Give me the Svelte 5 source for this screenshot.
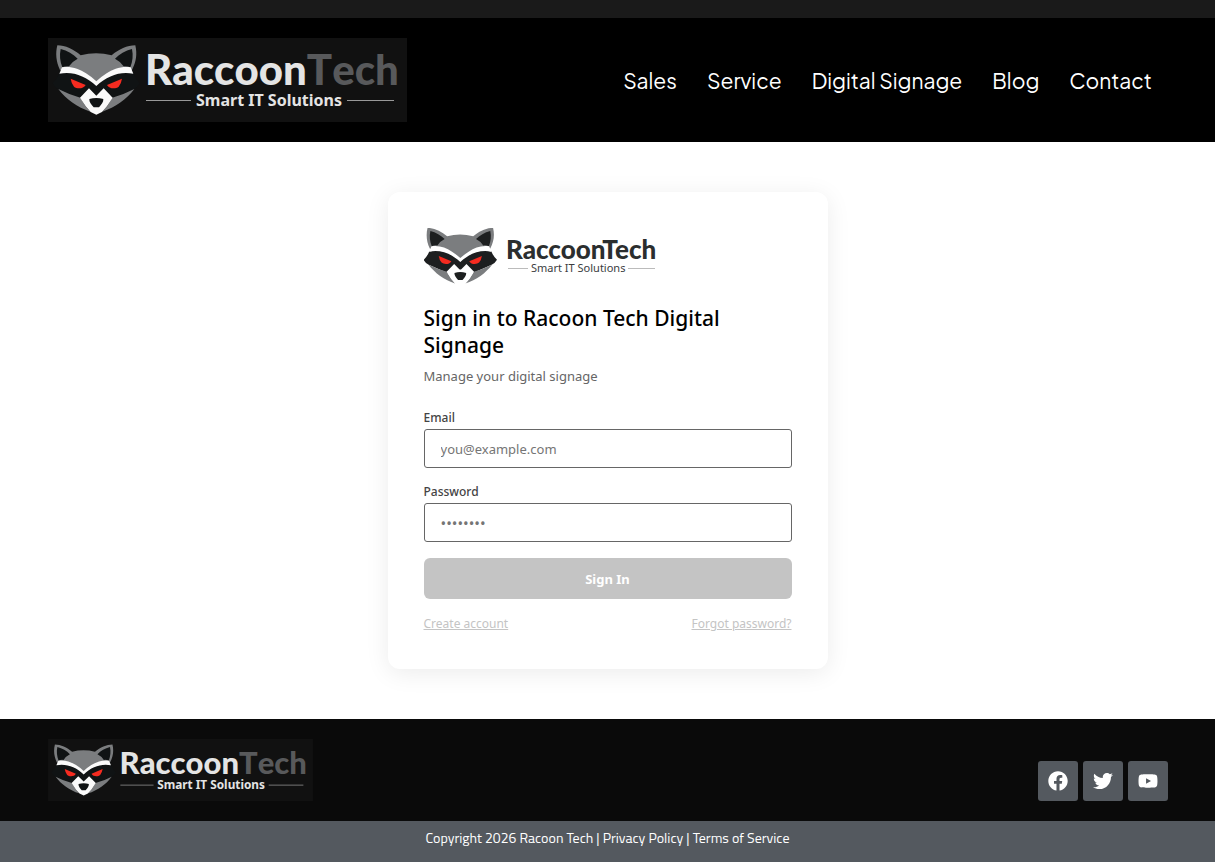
<script>
  const menu = ["Sales", "Service", "Digital Signage", "Blog", "Contact"];

  const redes = [
    {
      nombre: "Facebook",
      caja: "0 0 512 512",
      trazo: "M504 256C504 119 393 8 256 8S8 119 8 256c0 123.78 90.69 226.38 209.25 245V327.69h-63V256h63v-54.64c0-62.15 37-96.48 93.67-96.48 27.14 0 55.52 4.84 55.52 4.84v61h-31.28c-30.8 0-40.41 19.12-40.41 38.73V256h68.78l-11 71.69h-57.78V501C413.31 482.38 504 379.78 504 256z"
    },
    {
      nombre: "Twitter",
      caja: "0 0 512 512",
      trazo: "M459.37 151.716c.325 4.548.325 9.097.325 13.645 0 138.72-105.583 298.558-298.558 298.558-59.452 0-114.68-17.219-161.137-47.106 8.447.974 16.568 1.299 25.34 1.299 49.055 0 94.213-16.568 130.274-44.832-46.132-.975-84.792-31.188-98.112-72.772 6.498.974 12.995 1.624 19.818 1.624 9.421 0 18.843-1.3 27.614-3.573-48.081-9.747-84.143-51.98-84.143-102.985v-1.299c13.969 7.797 30.214 12.67 47.431 13.319-28.264-18.843-46.781-51.005-46.781-87.391 0-19.492 5.197-37.36 14.294-52.954 51.655 63.675 129.3 105.258 216.365 109.807-1.624-7.797-2.599-15.918-2.599-24.04 0-57.828 46.782-104.934 104.934-104.934 30.213 0 57.502 12.67 76.67 33.137 23.715-4.548 46.456-13.32 66.599-25.34-7.798 24.366-24.366 44.833-46.132 57.827 21.117-2.273 41.584-8.122 60.426-16.243-14.292 20.791-32.161 39.308-52.628 54.253z"
    },
    {
      nombre: "YouTube",
      caja: "0 0 576 512",
      trazo: "M549.655 124.083c-6.281-23.65-24.787-42.276-48.284-48.597C458.781 64 288 64 288 64S117.22 64 74.629 75.486c-23.497 6.322-42.003 24.947-48.284 48.597-11.412 42.867-11.412 132.305-11.412 132.305s0 89.438 11.412 132.305c6.281 23.65 24.787 41.5 48.284 47.821C117.22 448 288 448 288 448s170.78 0 213.371-11.486c23.497-6.321 42.003-24.171 48.284-47.821 11.412-42.867 11.412-132.305 11.412-132.305s0-89.438-11.412-132.305zm-317.51 213.508V175.185l142.739 81.205-142.739 81.201z"
    }
  ];

  let email = $state("");
  let password = $state("");

  function entrar(e) {
    e.preventDefault();
  }
</script>

{#snippet cabeza()}
  <path class="gris" d="M52 46C76 46 101 58 122 76Q168 64 215 76C236 58 262 46 286 46C292 72 289 95 276 120L168 160L60 120C48 95 46 70 52 46Z" />
  <path class="oscuro" d="M62 57C82 62 100 73 113 86Q97 94 87 109Q77 107 67 112C60 94 58 76 62 57Z" />
  <path class="oscuro" d="M276 57C256 62 238 73 225 86Q241 94 251 109Q261 107 271 112C278 94 280 76 276 57Z" />
  <path class="oscuro" d="M58 130C100 123 140 134 169 164C198 134 238 123 280 130Q287 148 300 160Q293 172 281 178L216 206L169 195L122 206L56 178Q44 172 38 160Q51 148 58 130Z" />
  <path class="blanco" d="M58 131L66 112C94 108 118 117 138 130Q154 140 169 154Q184 140 200 130C220 117 244 108 272 112L280 131C240 123 202 137 169 168C136 137 98 123 58 131Z" />
  <path class="gris" d="M55 177Q88 194 121 203L136 228L151 245C112 232 78 208 55 177Z" />
  <path class="gris" d="M283 177Q250 194 217 203L202 228L187 245C226 232 260 208 283 177Z" />
  <path class="blanco" d="M147 175L169 197L191 175L218 203L201 229L186 246L169 254L152 246L137 229L120 203Z" />
  <path class="oscuro" d="M148 207Q169 201 190 207C191 216 184 224 177 232H161C154 224 147 216 148 207Z" />
  <path class="rojo" d="M92 146L137 165C130 178 110 177 102 170Q94 160 92 146Z" />
  <path class="rojo" d="M246 146L201 165C208 178 228 177 236 170Q244 160 246 146Z" />
{/snippet}

{#snippet logoOscuro()}
  <svg class="logo-oscuro" viewBox="0 0 359 84" role="img" aria-label="RaccoonTech Smart IT Solutions">
    <rect width="359" height="84" fill="#111" />
    <g transform="translate(-8 -8) scale(.3333)">{@render cabeza()}</g>
    <text class="marca" x="97" y="47" font-size="42">Raccoon<tspan class="tech">Tech</tspan></text>
    <path d="M98 62.500H143M299 62.500H346" stroke="#999" />
    <text class="lema" x="148" y="68" font-size="16">Smart IT Solutions</text>
  </svg>
{/snippet}

<div class="franja"></div>

<header class="header">
  <a class="logo" href="#inicio">{@render logoOscuro()}</a>
  <nav class="nav">
    {#each menu as item}
      <a href="#{item.toLowerCase().replace(' ', '-')}">{item}</a>
    {/each}
  </nav>
</header>

<main class="main">
  <section class="card">
    <svg class="logo-claro" viewBox="0 0 240 56" role="img" aria-label="RaccoonTech Smart IT Solutions">
      <g transform="translate(-11 -13) scale(.28)">{@render cabeza()}</g>
      <text class="marca" x="82" y="31" font-size="26">RaccoonTech</text>
      <path d="M84 40.500H104M204 40.500H231" stroke="#bbb" />
      <text class="lema" x="107" y="44" font-size="11">Smart IT Solutions</text>
    </svg>

    <h1>Sign in to Racoon Tech Digital Signage</h1>
    <p class="subtitle">Manage your digital signage</p>

    <form onsubmit={entrar}>
      <label for="email">Email</label>
      <input id="email" type="email" placeholder="you@example.com" bind:value={email} />

      <label for="password">Password</label>
      <input id="password" type="password" placeholder="••••••••" bind:value={password} />

      <button class="btn" type="submit">Sign In</button>
    </form>

    <div class="links">
      <a href="#create">Create account</a>
      <a href="#forgot">Forgot password?</a>
    </div>
  </section>
</main>

<footer>
  <div class="pie">
    <a class="logo chico" href="#inicio">{@render logoOscuro()}</a>
    <div class="redes">
      {#each redes as red}
        <a href="#{red.nombre.toLowerCase()}" aria-label={red.nombre}>
          <svg viewBox={red.caja}><path d={red.trazo} /></svg>
        </a>
      {/each}
    </div>
  </div>
  <div class="copy">
    Copyright 2026 Racoon Tech | <a href="#privacy">Privacy Policy</a> | <a href="#terms">Terms of Service</a>
  </div>
</footer>

<style>
  :global(body) { background:#fff; font-family:"Segoe UI", "Noto Sans", sans-serif; }

  a { color:inherit; text-decoration:none; }
  svg { display:block; }

  .franja { height:18px; background:#1a1a1a; }
  .header { display:flex; align-items:center; justify-content:space-between; padding:20px 48px; background:#000; }
  .logo { width:359px; }
  .logo.chico { width:265px; }
  .logo-oscuro { width:100%; }
  .nav { display:flex; gap:30px; padding:2px 15px 0 0; color:#fff; font-family:"Plus Jakarta Sans", Inter, sans-serif; font-size:21px; line-height:28px; }

  .gris { fill:#7b7d7f; }
  .oscuro { fill:#101314; }
  .blanco { fill:#fafafa; }
  .rojo { fill:#f52b20; }
  .marca { font-family:Lato, sans-serif; font-weight:900; font-kerning:none; fill:#e4e4e4; }
  .tech { fill:#58595b; }
  .lema { font-family:"Noto Sans", sans-serif; font-weight:700; fill:#e4e4e4; }
  .logo-claro .oscuro { fill:#1d1f20; }
  .logo-claro .blanco { fill:#fff; }
  .logo-claro .marca { font-kerning:normal; fill:#2b2e2f; }
  .logo-claro .lema { font-weight:400; fill:#3b3d3e; }

  .main { display:flex; justify-content:center; padding:50px 20px; }
  .card { box-sizing:border-box; width:100%; max-width:440px; padding:36px; border-radius:12px; background:#fff; box-shadow:0 4px 24px rgba(0,0,0,.08); }
  .logo-claro { width:240px; margin-bottom:21px; }

  h1 { margin:0 0 7px; font-size:21px; font-weight:500; line-height:27px; color:#000; }
  .subtitle { margin:0 0 23px; font-size:13px; line-height:20px; color:#666; }

  form { display:flex; flex-direction:column; }
  label { margin-bottom:2px; font-size:12px; font-weight:500; line-height:18px; color:#444; }
  input { box-sizing:border-box; height:39px; margin:0 0 15px; padding:8px 16px; border:1px solid #666; border-radius:3px; background:#fff; font-family:inherit; font-size:13px; color:#333; }
  input[type="password"] { font-size:15px; }
  input::placeholder { color:#757575; }
  .btn { height:41px; margin-top:1px; border:none; border-radius:6px; background:#c4c4c4; color:#fff; font-family:inherit; font-size:13px; font-weight:700; cursor:pointer; }
  .links { display:flex; justify-content:space-between; margin-top:16px; font-size:12px; line-height:18px; color:#c4c4c4; }
  .links a { text-decoration:underline; }

  .pie { display:flex; align-items:flex-end; justify-content:space-between; padding:20px 47px 20px 48px; background:#0a0a0a; }
  .redes { display:flex; gap:5px; }
  .redes a { display:flex; align-items:center; justify-content:center; width:40px; height:40px; border-radius:3px; background:#54595f; }
  .redes svg { width:20px; height:20px; fill:#fff; }
  .copy { padding:7px 20px 14px; background:#54595f; color:#fff; font-family:"Titillium Web", Roboto, sans-serif; font-size:14px; line-height:20px; text-align:center; }
</style>
